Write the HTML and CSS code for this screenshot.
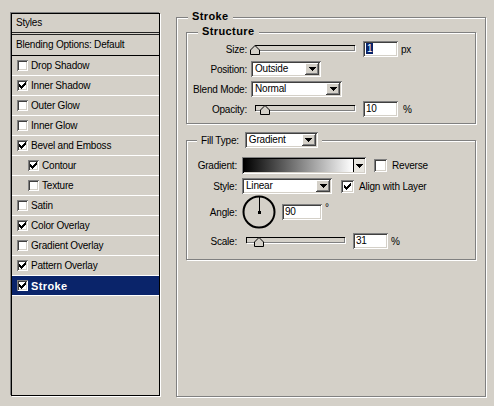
FILE: index.html
```html
<!DOCTYPE html>
<html>
<head>
<meta charset="utf-8">
<link rel="stylesheet" href="styles.css">
</head>
<body>
<div class="dialog">
  <div class="list">
    <div class="list-head">Styles</div>
    <div class="list-blend">Blending Options: Default</div>
    <div class="item"><span class="cb"></span>Drop Shadow</div>
    <div class="item"><span class="cb"><svg class="chk" viewBox="0 0 7 7"><path d="M6 0h1v1H6zM5 1h2v1H5zM0 2h1v1H0zM4 2h3v1H4zM0 3h2v1H0zM3 3h3v1H3zM0 4h5v1H0zM1 5h3v1H1zM2 6h1v1H2z"/></svg></span>Inner Shadow</div>
    <div class="item"><span class="cb"></span>Outer Glow</div>
    <div class="item"><span class="cb"></span>Inner Glow</div>
    <div class="item"><span class="cb"><svg class="chk" viewBox="0 0 7 7"><path d="M6 0h1v1H6zM5 1h2v1H5zM0 2h1v1H0zM4 2h3v1H4zM0 3h2v1H0zM3 3h3v1H3zM0 4h5v1H0zM1 5h3v1H1zM2 6h1v1H2z"/></svg></span>Bevel and Emboss</div>
    <div class="item sub"><span class="cb"><svg class="chk" viewBox="0 0 7 7"><path d="M6 0h1v1H6zM5 1h2v1H5zM0 2h1v1H0zM4 2h3v1H4zM0 3h2v1H0zM3 3h3v1H3zM0 4h5v1H0zM1 5h3v1H1zM2 6h1v1H2z"/></svg></span>Contour</div>
    <div class="item sub"><span class="cb"></span>Texture</div>
    <div class="item"><span class="cb"></span>Satin</div>
    <div class="item"><span class="cb"><svg class="chk" viewBox="0 0 7 7"><path d="M6 0h1v1H6zM5 1h2v1H5zM0 2h1v1H0zM4 2h3v1H4zM0 3h2v1H0zM3 3h3v1H3zM0 4h5v1H0zM1 5h3v1H1zM2 6h1v1H2z"/></svg></span>Color Overlay</div>
    <div class="item"><span class="cb"></span>Gradient Overlay</div>
    <div class="item"><span class="cb"><svg class="chk" viewBox="0 0 7 7"><path d="M6 0h1v1H6zM5 1h2v1H5zM0 2h1v1H0zM4 2h3v1H4zM0 3h2v1H0zM3 3h3v1H3zM0 4h5v1H0zM1 5h3v1H1zM2 6h1v1H2z"/></svg></span>Pattern Overlay</div>
    <div class="item active"><span class="cb"><svg class="chk" viewBox="0 0 7 7"><path d="M6 0h1v1H6zM5 1h2v1H5zM0 2h1v1H0zM4 2h3v1H4zM0 3h2v1H0zM3 3h3v1H3zM0 4h5v1H0zM1 5h3v1H1zM2 6h1v1H2z"/></svg></span>Stroke</div>
  </div>

  <div class="group stroke-group">
    <div class="legend">Stroke</div>

    <div class="group structure">
      <div class="legend">Structure</div>
      <div class="row">
        <div class="lbl">Size:</div>
        <div class="slider">
          <div class="track"></div>
          <svg class="thumb" style="left:-1px" viewBox="0 0 10 10"><path d="M5 .5L9.5 5V9.5H.5V5Z"/></svg>
        </div>
        <div class="input"><span class="selected">1</span></div>
        <span class="unit">px</span>
      </div>
      <div class="row">
        <div class="lbl">Position:</div>
        <div class="select w-pos"><span class="val">Outside</span><span class="btn"><svg class="arrow" viewBox="0 0 7 4"><path d="M0 0h7v1H0zM1 1h5v1H1zM2 2h3v1H2zM3 3h1v1H3z"/></svg></span></div>
      </div>
      <div class="row">
        <div class="lbl">Blend Mode:</div>
        <div class="select w-blend"><span class="val">Normal</span><span class="btn"><svg class="arrow" viewBox="0 0 7 4"><path d="M0 0h7v1H0zM1 1h5v1H1zM2 2h3v1H2zM3 3h1v1H3z"/></svg></span></div>
      </div>
      <div class="row">
        <div class="lbl">Opacity:</div>
        <div class="slider">
          <div class="track"></div>
          <svg class="thumb" style="left:9px" viewBox="0 0 10 10"><path d="M5 .5L9.5 5V9.5H.5V5Z"/></svg>
        </div>
        <div class="input">10</div>
        <span class="unit pct">%</span>
      </div>
    </div>

    <div class="group fill">
      <div class="legend legend-fill">
        <span>Fill Type:</span>
        <div class="select w-fill"><span class="val">Gradient</span><span class="btn"><svg class="arrow" viewBox="0 0 7 4"><path d="M0 0h7v1H0zM1 1h5v1H1zM2 2h3v1H2zM3 3h1v1H3z"/></svg></span></div>
      </div>
      <div class="row row-grad">
        <div class="lbl">Gradient:</div>
        <div class="gradfield"><span class="gradbar"></span><span class="gradbtn"><svg class="arrow" viewBox="0 0 7 4"><path d="M0 0h7v1H0zM1 1h5v1H1zM2 2h3v1H2zM3 3h1v1H3z"/></svg></span></div>
        <span class="cb big rev"></span>
        <span class="cbtext">Reverse</span>
      </div>
      <div class="row row-style">
        <div class="lbl">Style:</div>
        <div class="select w-style"><span class="val">Linear</span><span class="btn"><svg class="arrow" viewBox="0 0 7 4"><path d="M0 0h7v1H0zM1 1h5v1H1zM2 2h3v1H2zM3 3h1v1H3z"/></svg></span></div>
        <span class="cb big align"><svg class="chk" viewBox="0 0 7 7"><path d="M6 0h1v1H6zM5 1h2v1H5zM0 2h1v1H0zM4 2h3v1H4zM0 3h2v1H0zM3 3h3v1H3zM0 4h5v1H0zM1 5h3v1H1zM2 6h1v1H2z"/></svg></span>
        <span class="cbtext">Align with Layer</span>
      </div>
      <div class="row row-angle">
        <div class="lbl">Angle:</div>
        <svg class="dial" viewBox="0 0 34 34"><circle cx="17" cy="17" r="15.5"/><path class="needle" d="M17.5 17V2"/><rect x="16" y="16" width="3" height="3"/></svg>
        <div class="input wide">90</div>
        <span class="deg">°</span>
      </div>
      <div class="row row-scale">
        <div class="lbl">Scale:</div>
        <div class="slider short">
          <div class="track"></div>
          <svg class="thumb" style="left:12px" viewBox="0 0 10 10"><path d="M5 .5L9.5 5V9.5H.5V5Z"/></svg>
        </div>
        <div class="input">31</div>
        <span class="unit">%</span>
      </div>
    </div>
  </div>
</div>
</body>
</html>
```

FILE: styles.css
```css
html, body {
  margin: 0;
  padding: 0;
}
body {
  background: #d4d0c8;
  font-family: "Liberation Sans", Arial, sans-serif;
  font-size: 10px;
  letter-spacing: -0.2px;
  color: #000;
}
.dialog {
  display: flex;
  align-items: flex-start;
  width: 494px;
  height: 406px;
  overflow: hidden;
}

/* left list */
.list {
  margin: 13px 0 0 11px;
  width: 149px;
  height: 383px;
  box-sizing: border-box;
  border: 1px solid #000;
  box-shadow: 1px 1px 0 #fff, -1px -1px 0 #808080;
  flex: none;
}
.list-head {
  height: 18px;
  line-height: 18px;
  padding-left: 4px;
  border-bottom: 3px double #222;
}
.list-blend {
  height: 20px;
  line-height: 20px;
  padding-left: 4px;
  border-bottom: 1px solid #000;
}
.item {
  height: 19px;
  border-bottom: 1px solid #fff;
  display: flex;
  align-items: center;
  padding-left: 5px;
  gap: 3px;
}
.item.sub {
  padding-left: 16px;
}
.item.active {
  background: #0a246a;
  color: #fff;
  font-weight: bold;
  font-size: 11px;
  letter-spacing: 0.4px;
}

/* checkbox */
.cb {
  width: 11px;
  height: 11px;
  box-sizing: border-box;
  background: #fff;
  box-shadow: inset 1px 1px #808080, inset -1px -1px #fff, inset 2px 2px #404040, inset -2px -2px #d4d0c8;
  display: flex;
  align-items: center;
  justify-content: center;
  flex: none;
}
.cb.big {
  width: 13px;
  height: 13px;
}
.chk {
  width: 7px;
  height: 7px;
  fill: #000;
  shape-rendering: crispEdges;
}

/* group boxes */
.group {
  position: relative;
  box-sizing: border-box;
  border: 1px solid #808080;
  box-shadow: inset 1px 1px #fff, 1px 1px #fff;
}
.stroke-group {
  margin: 17px 0 0 16px;
  width: 310px;
  height: 380px;
  padding: 14px 9px 0;
  flex: none;
}
.structure {
  width: 290px;
  height: 92px;
  padding-top: 8px;
}
.fill {
  width: 290px;
  height: 120px;
  margin-top: 16px;
  padding-top: 16px;
}
.legend {
  position: absolute;
  top: -8px;
  left: 11px;
  padding: 0 4px;
  background: #d4d0c8;
  font-weight: bold;
  font-size: 11px;
  letter-spacing: 0.4px;
  line-height: 13px;
}
.legend-fill {
  top: -9px;
  left: 10px;
  height: 16px;
  display: flex;
  align-items: center;
  gap: 6px;
  font-weight: normal;
  font-size: 10px;
  letter-spacing: -0.2px;
}

/* rows */
.row {
  display: flex;
  align-items: center;
  height: 16px;
}
.structure .row + .row {
  margin-top: 4px;
}
.lbl {
  width: 60px;
  margin-right: 4px;
  text-align: right;
  flex: none;
}
.fill .lbl {
  width: 50px;
  margin-right: 5px;
}
.row-grad {
  height: 17px;
}
.row-style {
  margin-top: 4px;
}
.row-angle {
  height: 34px;
  margin-top: 1px;
}
.row-scale {
  margin-top: 4px;
}

/* slider */
.slider {
  position: relative;
  width: 106px;
  height: 16px;
  flex: none;
}
.slider.short {
  width: 105px;
}
.track {
  margin: 4px 0 0 4px;
  width: 100px;
  height: 6px;
  box-sizing: border-box;
  background: #d4d0c8;
  box-shadow: inset 1px 1px #000, inset -1px -1px #808080, 1px 1px #fff;
}
.slider.short .track {
  width: 99px;
}
.thumb {
  position: absolute;
  top: 4px;
  width: 10px;
  height: 10px;
  fill: #d4d0c8;
  stroke: #000;
  stroke-width: 1;
}

/* text inputs */
.input {
  width: 35px;
  height: 16px;
  box-sizing: border-box;
  margin-left: 6px;
  padding: 2px 2px 0 3px;
  line-height: 12px;
  background: #fff;
  box-shadow: inset 1px 1px #808080, inset -1px -1px #fff, inset 2px 2px #404040, inset -2px -2px #d4d0c8;
  flex: none;
}
.input.wide {
  width: 40px;
}
.selected {
  background: #0a246a;
  color: #fff;
  padding: 0 1px;
}
.unit {
  margin-left: 3px;
}
.unit.pct {
  margin-left: 5px;
}
.deg {
  align-self: flex-start;
  margin: 9px 0 0 3px;
  line-height: 8px;
}

/* selects */
.select {
  display: flex;
  align-items: stretch;
  height: 16px;
  box-sizing: border-box;
  padding: 2px;
  background: #fff;
  box-shadow: inset 1px 1px #808080, inset -1px -1px #fff, inset 2px 2px #404040, inset -2px -2px #d4d0c8;
  flex: none;
}
.select .val {
  flex: 1;
  padding-left: 2px;
  line-height: 12px;
}
.btn {
  width: 14px;
  background: #d4d0c8;
  box-shadow: inset -1px -1px #404040, inset 1px 1px #fff, inset -2px -2px #808080;
  display: flex;
  align-items: center;
  justify-content: center;
}
.arrow {
  width: 7px;
  height: 4px;
  fill: #000;
  shape-rendering: crispEdges;
}
.w-pos { width: 70px; }
.w-blend { width: 91px; }
.w-fill { width: 73px; }
.w-style { width: 90px; }

/* gradient field */
.gradfield {
  display: flex;
  width: 124px;
  height: 17px;
  box-sizing: border-box;
  padding: 2px;
  background: #d4d0c8;
  box-shadow: inset 1px 1px #808080, inset -1px -1px #fff, inset 2px 2px #000, inset -2px -2px #d4d0c8;
  flex: none;
}
.gradbar {
  flex: 1;
  background: linear-gradient(to right, #000, #fff);
}
.gradbtn {
  width: 10px;
  border-left: 1px solid #000;
  background: #e8e6e0;
  display: flex;
  align-items: center;
  justify-content: center;
}
.rev {
  margin-left: 8px;
}
.align {
  margin-left: 9px;
}
.cbtext {
  margin-left: 5px;
}

/* angle dial */
.dial {
  width: 34px;
  height: 34px;
  flex: none;
}
.dial circle {
  fill: none;
  stroke: #000;
  stroke-width: 2;
}
.dial .needle {
  stroke: #000;
  stroke-width: 1;
  fill: none;
}
.dial rect {
  fill: #000;
}
```
